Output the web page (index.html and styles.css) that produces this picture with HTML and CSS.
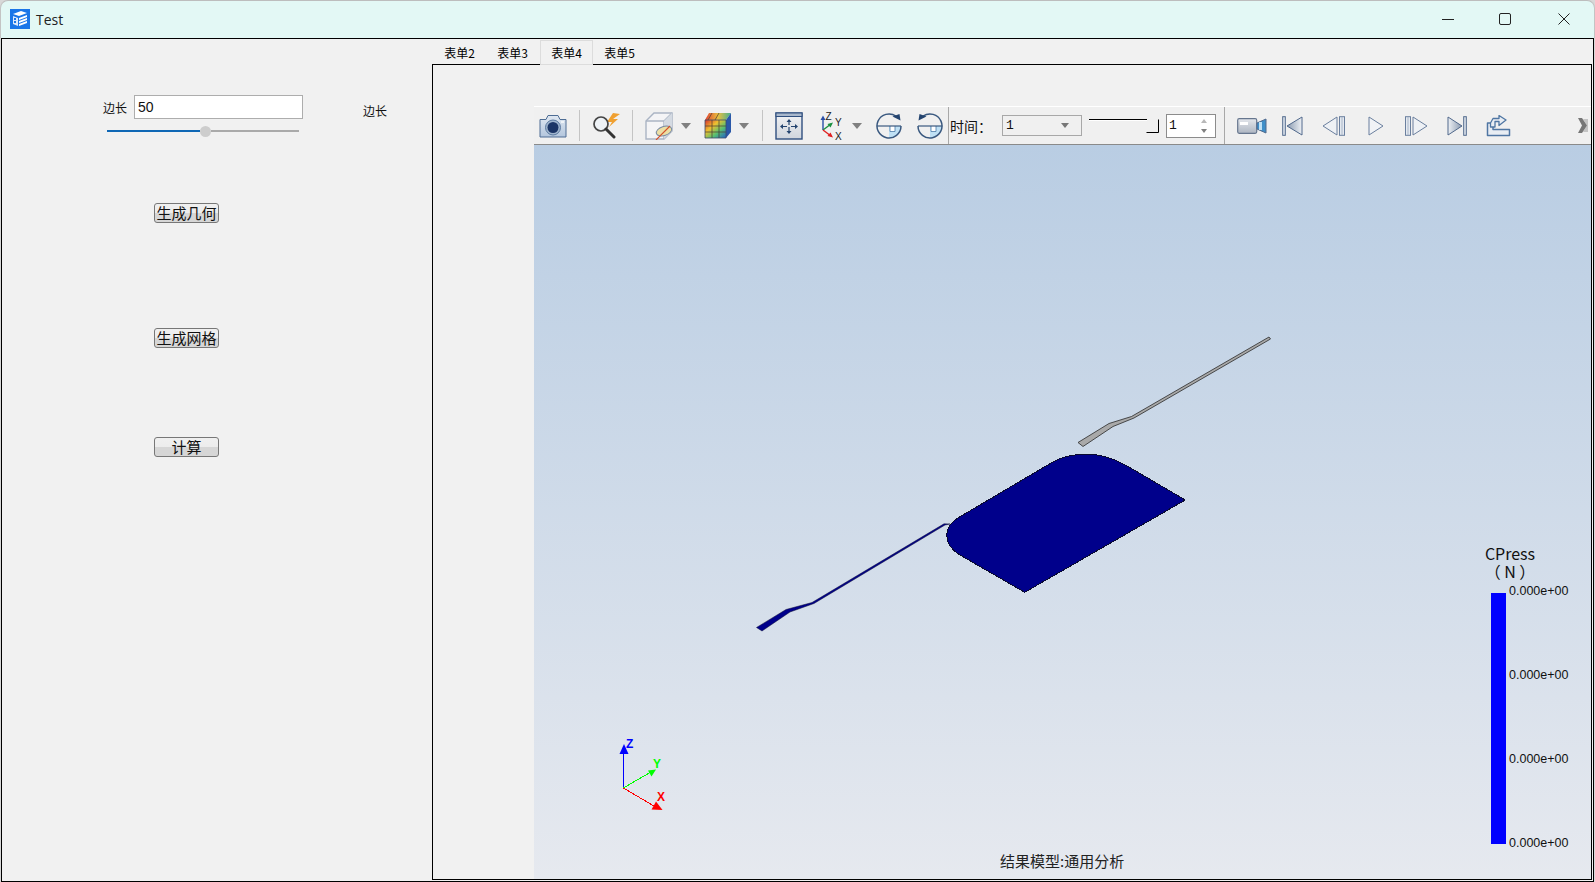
FILE: index.html
```html
<!DOCTYPE html>
<html lang="zh">
<head>
<meta charset="utf-8">
<title>Test</title>
<link rel="stylesheet" href="styles.css">
</head>
<body>
<div class="window">
  <header class="titlebar">
    <svg class="app-icon" width="20" height="20" viewBox="0 0 20 20">
      <rect width="20" height="20" fill="#1a76e8"/>
      <path d="M3 5 L11 2 L17 4 L9 7 Z" fill="#fff"/>
      <path d="M3 7 L8 9 L8 17 L3 15 Z" fill="#dce9fb"/>
      <path d="M9 9 L17 6 L17 8 L9 11 Z M9 12 L17 9 L17 11 L9 14 Z M9 15 L17 12 L17 14 L9 17 Z" fill="#fff"/>
      <path d="M4 9h2v2H4z M4 12h2v2H4z" fill="#1a76e8"/>
    </svg>
    <span class="app-title">Test</span>
    <div class="win-controls">
      <svg width="12" height="12" viewBox="0 0 12 12"><path d="M0 6.5H12" stroke="#222" stroke-width="1"/></svg>
      <svg class="win-max" width="12" height="12" viewBox="0 0 12 12"><rect x=".5" y=".5" width="11" height="11" rx="1.5" fill="none" stroke="#222"/></svg>
      <svg class="win-close" width="12" height="12" viewBox="0 0 12 12"><path d="M.5 .5L11.5 11.5M11.5 .5L.5 11.5" stroke="#222" stroke-width="1"/></svg>
    </div>
  </header>

  <div class="client">
    <aside class="left-panel">
      <div class="param-row">
        <label class="small-label">边长</label>
        <input class="text-field" type="text" value="50">
        <span class="small-label second-label">边长</span>
      </div>
      <div class="slider"><div class="slider-fill"></div><div class="slider-thumb"></div><div class="slider-rest"></div></div>
      <button class="action-btn first-btn">生成几何</button>
      <button class="action-btn second-btn">生成网格</button>
      <button class="action-btn third-btn">计算</button>
    </aside>

    <main class="right-panel">
      <nav class="tabs">
        <span class="tab">表单2</span>
        <span class="tab">表单3</span>
        <span class="tab active">表单4</span>
        <span class="tab">表单5</span>
      </nav>
      <section class="pane">
        <div class="viewer">
          <div class="toolbar">
            <svg class="ml5" width="28" height="24" viewBox="0 0 28 24">
              <defs><linearGradient id="camg" x1="0" y1="0" x2="0" y2="1"><stop offset="0" stop-color="#dfe7f1"/><stop offset="1" stop-color="#b3c6dd"/></linearGradient></defs>
              <path d="M1 5.5H7L9 1.5H19L21 5.5H27V23H1Z" fill="url(#camg)" stroke="#4e6d94" stroke-linejoin="round"/>
              <circle cx="14" cy="13.5" r="7.5" fill="#9fb4cd" stroke="#5b7aa0"/>
              <circle cx="14" cy="13.5" r="5.5" fill="#1b3566"/>
              <rect x="22" y="7" width="3" height="2" fill="#eef3f8"/>
            </svg>
            <i class="sep ml12"></i>
            <svg class="ml12" width="28" height="26" viewBox="0 0 28 26">
              <path d="M21 0 L15 9 H20 L17 14 L26 6 H21 L28 1 Z" fill="#f0a030"/>
              <circle cx="9" cy="11" r="7" fill="#eef2f6" stroke="#444" stroke-width="1.7"/>
              <path d="M14 16L22 24" stroke="#333" stroke-width="3" stroke-linecap="round"/>
            </svg>
            <i class="sep ml12"></i>
            <svg class="ml12" width="28" height="28" viewBox="0 0 28 28">
              <path d="M1 9L9 1H27V19L19 27H1Z" fill="#f4f4f6" stroke="#aab4c4" stroke-width="1.4"/>
              <path d="M1 9H19V27M19 9L27 1" fill="none" stroke="#aab4c4" stroke-width="1.4"/>
              <path d="M19 9L27 1V19L19 27Z" fill="#d4dae2"/>
              <ellipse cx="19" cy="19" rx="8" ry="4.5" transform="rotate(-18 19 19)" fill="#ecdfa4" stroke="#7a8aa0"/>
              <path d="M11 28L25 14" stroke="#d4502a" stroke-width="1.1"/>
            </svg>
            <svg class="ml8" width="10" height="6" viewBox="0 0 10 6"><path d="M0 0H10L5 6Z" fill="#808080"/></svg>
            <svg class="ml13" width="28" height="27" viewBox="0 0 28 27">
              <defs>
                <linearGradient id="ccg" x1="0" y1="0" x2="1" y2="1"><stop offset="0" stop-color="#d8302c"/><stop offset=".35" stop-color="#eec030"/><stop offset=".65" stop-color="#58c070"/><stop offset="1" stop-color="#2060c8"/></linearGradient>
                <linearGradient id="cct" x1="0" y1="0" x2="1" y2="0"><stop offset="0" stop-color="#e04030"/><stop offset=".5" stop-color="#e8c040"/><stop offset="1" stop-color="#40b090"/></linearGradient>
              </defs>
              <path d="M5 1H27L22 8H1Z" fill="url(#cct)"/>
              <rect x="1" y="8" width="21" height="18" fill="url(#ccg)"/>
              <path d="M22 8L27 1V20L22 26Z" fill="#2a58a8"/>
              <path d="M1 14H22M1 20H22M8 8V26M15 8V26M8 1L4 8M15 1L11 8" stroke="#4a3a30" stroke-width=".7"/>
              <path d="M1 8H22V26H1Z" fill="none" stroke="#3c4c68" stroke-width=".8"/>
            </svg>
            <svg class="ml7" width="10" height="6" viewBox="0 0 10 6"><path d="M0 0H10L5 6Z" fill="#808080"/></svg>
            <i class="sep ml13"></i>
            <svg class="ml12" width="28" height="28" viewBox="0 0 28 28">
              <defs><linearGradient id="fitg" x1="0" y1="0" x2="0" y2="1"><stop offset="0" stop-color="#f2f3f5"/><stop offset="1" stop-color="#d0d5dd"/></linearGradient></defs>
              <rect x="1" y="1" width="26" height="26" fill="url(#fitg)" stroke="#2f4f7f" stroke-width="1.4"/>
              <rect x="1" y="1" width="26" height="3.5" fill="#a9b8cc" stroke="#2f4f7f"/>
              <path d="M14 8V13M14 15V20M6 14.5H12M16 14.5H22" stroke="#24446f" stroke-width="1.2"/>
              <path d="M14 7L11.5 10H16.5ZM14 22L11.5 19H16.5ZM5 14.5L8 12V17ZM23 14.5L20 12V17Z" fill="#24446f"/>
            </svg>
            <svg class="ml17" width="23" height="28" viewBox="0 0 23 28">
              <path d="M3 18V6" stroke="#2a4fa8" stroke-width="1.4"/><path d="M3 3.5L.5 8H5.5Z" fill="#2a4fa8"/>
              <path d="M3 18L11 12" stroke="#1a9040" stroke-width="1.4"/><path d="M13 10.5L7.5 12L10.5 15.5Z" fill="#1a9040"/>
              <path d="M3 18L11 24" stroke="#e02020" stroke-width="1.4"/><path d="M13 25.5L7.5 24L10.5 20.5Z" fill="#e02020"/>
              <text class="axis-mini" x="5.5" y="8">Z</text><text class="axis-mini" x="15" y="14">Y</text><text class="axis-mini" x="15" y="27.5">X</text>
            </svg>
            <svg class="ml9" width="10" height="6" viewBox="0 0 10 6"><path d="M0 0H10L5 6Z" fill="#808080"/></svg>
            <svg class="ml14" width="26" height="26" viewBox="0 0 26 26">
              <path d="M13 13H25A12 12 0 0 1 13 25Z" fill="#bfe0f4"/>
              <path d="M14 13V18.5H19V13" fill="#fff" stroke="#4a7aa8" stroke-width=".8"/>
              <path d="M1 13H25" stroke="#39587f" stroke-width="1.2"/>
              <path d="M20 3.2A12 12 0 1 0 25 13" fill="none" stroke="#39587f" stroke-width="1.5"/>
              <path d="M24.5 7.5L23.5 1L16.5 3.5Z" fill="#24446f"/>
            </svg>
            <svg class="ml15" width="26" height="26" viewBox="0 0 26 26">
              <path d="M13 13H25A12 12 0 0 1 13 25Z" fill="#bfe0f4"/>
              <path d="M14 13V18.5H19V13" fill="#fff" stroke="#4a7aa8" stroke-width=".8"/>
              <path d="M1 13H25" stroke="#39587f" stroke-width="1.2"/>
              <path d="M6 3.2A12 12 0 1 1 1 13" fill="none" stroke="#39587f" stroke-width="1.5"/>
              <path d="M1.5 7.5L2.5 1L9.5 3.5Z" fill="#24446f"/>
            </svg>
            <i class="sep sep-full ml5"></i>
            <span class="time-label">时间：</span>
            <div class="combo"><span>1</span><svg width="8" height="5" viewBox="0 0 8 5"><path d="M0 0H8L4 5Z" fill="#777"/></svg></div>
            <svg class="ml7" width="70" height="14" viewBox="0 0 70 14">
              <path d="M0 .5H58" stroke="#000"/><path d="M0 1.5H58" stroke="#fff"/>
              <path d="M57.5 13.5H69.5V.5" fill="none" stroke="#000"/>
            </svg>
            <div class="spin ml7"><span>1</span><svg width="8" height="16" viewBox="0 0 8 16"><path d="M4 1L7 5H1Z" fill="#b8b8b8"/><path d="M4 15L7 11H1Z" fill="#808080"/></svg></div>
            <i class="sep sep-full ml8"></i>
            <div class="playbar ml8">
              <svg class="ml4" width="30" height="16" viewBox="0 0 30 16">
                <defs><linearGradient id="vidg" x1="0" y1="0" x2="0" y2="1"><stop offset="0" stop-color="#e4e7ec"/><stop offset="1" stop-color="#aeb6c2"/></linearGradient></defs>
                <rect x=".7" y=".7" width="19" height="14.6" rx="1.5" fill="url(#vidg)" stroke="#66768e" stroke-width="1.2"/>
                <rect x="3" y="4" width="8" height="3" fill="#fff"/>
                <path d="M20 5L29 1V15L20 11Z" fill="#3f8fc8" stroke="#51698c"/>
                <rect x="22" y="4" width="3" height="8" fill="#bfe0f4"/>
              </svg>
              <svg class="ml15" width="21" height="20" viewBox="0 0 21 20">
                <defs><linearGradient id="pbg" x1="0" y1="0" x2="1" y2="0"><stop offset="0" stop-color="#8a9ab0"/><stop offset="1" stop-color="#eef1f5"/></linearGradient></defs>
                <rect x=".7" y=".7" width="2.6" height="18.6" fill="#dfe5ee" stroke="#51698c"/>
                <path d="M20 1V19L5 10Z" fill="url(#pbg)" stroke="#51698c" stroke-linejoin="round"/>
              </svg>
              <svg class="ml19" width="23" height="20" viewBox="0 0 23 20">
                <path d="M15 1V19L1 10Z" fill="#eef1f5" stroke="#6a7f9e" stroke-linejoin="round"/>
                <rect x="17.5" y=".7" width="5" height="18.6" fill="#e4e9f0" stroke="#6a7f9e"/>
                <path d="M20 1V19" stroke="#a9b6c8"/>
              </svg>
              <svg class="ml23" width="16" height="20" viewBox="0 0 16 20">
                <path d="M1 1V19L15 10Z" fill="#f1f3f6" stroke="#6a7f9e" stroke-linejoin="round"/>
              </svg>
              <svg class="ml21" width="23" height="20" viewBox="0 0 23 20">
                <rect x=".5" y=".7" width="5" height="18.6" fill="#e4e9f0" stroke="#6a7f9e"/>
                <path d="M3 1V19" stroke="#a9b6c8"/>
                <path d="M8 1V19L22 10Z" fill="#eef1f5" stroke="#6a7f9e" stroke-linejoin="round"/>
              </svg>
              <svg class="ml19" width="20" height="20" viewBox="0 0 20 20">
                <defs><linearGradient id="pbg2" x1="0" y1="0" x2="1" y2="0"><stop offset="0" stop-color="#eef1f5"/><stop offset="1" stop-color="#8a9ab0"/></linearGradient></defs>
                <path d="M1 1V19L15 10Z" fill="url(#pbg2)" stroke="#51698c" stroke-linejoin="round"/>
                <rect x="16.7" y=".7" width="2.6" height="18.6" fill="#dfe5ee" stroke="#51698c"/>
              </svg>
              <svg class="ml19" width="25" height="22" viewBox="0 0 25 22">
                <path d="M1.5 8V20.5H23.5V14.5H7V8Z" fill="#e8edf3" stroke="#4f76a3" stroke-width="1.5" stroke-linejoin="round"/>
                <path d="M4.5 8V12H9V6.5H13V10.5L20 5L13 .5V3.5H7Z" fill="#e8edf3" stroke="#4f76a3" stroke-width="1.3" stroke-linejoin="round"/>
              </svg>
              <svg class="overflow" width="10" height="15" viewBox="0 0 10 15">
                <path d="M5 1H10V14H5L9 7.5Z" fill="#c4c4c4"/><path d="M0 0H4L9 7.5L4 15H0L4 7.5Z" fill="#777"/>
              </svg>
            </div>
          </div>
          <div class="canvas">
            <svg class="scene" width="1057" height="734" viewBox="534 145 1057 734">
              <path d="M1270.5 339L1134 418L1113 426.5L1083 446.5L1078 442.5L1109 423.5L1131.5 416.5L1269 337Z" fill="#a9a9a9" stroke="#2a2a2a" stroke-width=".8"/>
              <path d="M950 524L945 525L814 603.5L790 612L762 631L756.5 627.5L786 609.5L812 602.5L944 523.8Z" fill="#00008b" stroke="#0a0a30" stroke-width=".5"/>
              <path d="M1024.7 592.3L1185.3 500L1126.7 465.7Q1106 454 1086.7 454.3Q1068 454 1053.3 461.7L960 516.7Q946.7 524 946.7 535Q946.7 547 960 555Z" fill="#00008b" stroke="#0a0a30" stroke-width="1" shape-rendering="crispEdges"/>
              <g shape-rendering="crispEdges">
                <path d="M623.3 788V751" stroke="#0000ff" stroke-width="1"/>
                <path d="M623.3 788L650 772.5" stroke="#00ff00" stroke-width="1"/>
                <path d="M623.3 788L654 806" stroke="#ff0000" stroke-width="1"/>
              </g>
              <path d="M624 744L628.5 754H619.5Z" fill="#0000ff"/>
              <path d="M656 769.5L648 770.5L651.5 776.5Z" fill="#00ff00"/>
              <path d="M662.5 810L651.5 809.5L656 801.5Z" fill="#ff0000"/>
              <text class="axis-label z" x="626" y="748">Z</text>
              <text class="axis-label y" x="653" y="768">Y</text>
              <text class="axis-label x" x="657" y="801">X</text>
            </svg>
            <div class="legend">
              <div class="legend-title">CPress<br>（ N ）</div>
              <div class="legend-body">
                <div class="legend-bar"></div>
                <div class="legend-ticks"><span>0.000e+00</span><span>0.000e+00</span><span>0.000e+00</span><span>0.000e+00</span></div>
              </div>
            </div>
            <div class="result-caption">结果模型:通用分析</div>
          </div>
        </div>
      </section>
    </main>
  </div>
</div>
</body>
</html>
```

FILE: styles.css
```css
* { box-sizing: border-box; }
html, body { margin: 0; padding: 0; height: 100%; overflow: hidden; background: #d8d8d8; }
body { font-family: "Noto Sans CJK SC", "Liberation Sans", sans-serif; color: #000; }

.window { width: 1595px; height: 882px; display: flex; flex-direction: column; }

.titlebar {
  height: 38px; flex: none; display: flex; align-items: center;
  background: #e3f8f5; border-radius: 8px 8px 0 0;
  border-top: 1px solid #bdbdbd; border-left: 1px solid #c4c4c4; border-right: 1px solid #c4c4c4;
  padding: 0 0 1px 9px;
}
.app-icon { flex: none; }
.app-title { margin-left: 6px; font: 14px "Open Sans", sans-serif; color: #222; }
.win-controls { margin-left: auto; display: flex; gap: 46px; margin-right: 24px; }
.win-controls svg { display: block; }
.win-max { margin-left: -1px; }
.win-close { margin-left: 1px; }

.client {
  flex: 1; min-height: 0; margin: 0 1px; display: flex;
  border: 1px solid #000; background: #f1f1f1;
}

.left-panel { width: 430px; flex: none; display: flex; flex-direction: column; align-items: flex-start; padding-top: 56px; }
.param-row { display: flex; align-items: flex-start; margin-left: 101px; }
.small-label { width: 24px; font-size: 12px; line-height: 26px; color: #111; flex: none; }
.second-label { margin-left: 60px; margin-top: 3px; }
.text-field {
  width: 169px; height: 24px; margin-left: 7px; padding: 0 3px;
  border: 1px solid #adadad; background: #fff; outline: none;
  font: 14px "Liberation Sans", sans-serif; color: #111;
}
.slider { position: relative; margin: 6px 0 0 105px; width: 192px; height: 2px; display: flex; align-items: center; }
.slider-fill { width: 93px; height: 2px; background: #0f67b5; }
.slider-rest { flex: 1; height: 2px; background: #aaa; }
.slider-thumb { width: 11px; height: 11px; margin: -5px 0; border-radius: 50%; background: #cdcdcd; flex: none; }

.action-btn {
  display: block; width: 65px; height: 20px; margin-left: 152px; padding: 0;
  border: 1px solid #777; border-radius: 3px;
  background: linear-gradient(#f0f0f0 0, #ececec 50%, #d6d6d6 50%, #d6d6d6 100%);
  font: 15px/18px "Noto Sans CJK SC", sans-serif; color: #111; text-align: center;
}
.first-btn { margin-top: 71px; }
.second-btn { margin-top: 105px; }
.third-btn { margin-top: 89px; letter-spacing: 0; }

.right-panel { flex: 1; min-width: 0; display: flex; flex-direction: column; padding: 0 1px 1px 0; }
.tabs { height: 25px; flex: none; display: flex; padding: 1px 0 0 1px; position: relative; z-index: 1; }
.tab {
  width: 53px; height: 25px; display: flex; align-items: center; justify-content: center;
  font: 12px "Noto Sans CJK SC", sans-serif; color: #000;
}
.tab.active { background: #f1f1f1; border: 1px solid #dcdcdc; border-bottom: 1px solid #dcdcdc; margin-left: 1px; }

.pane { flex: 1; min-height: 0; border: 1px solid #000; padding: 41px 0 0 101px; }
.viewer { height: 100%; display: flex; flex-direction: column; }

.toolbar {
  height: 39px; flex: none; display: flex; align-items: center;
  background: #f0f0f0; border-top: 1px solid #fff; border-bottom: 1px solid #8a8a8a;
}
.toolbar svg { flex: none; display: block; }
.sep { display: block; width: 1px; height: 31px; background: #c4c4c4; flex: none; }
.sep-full { height: 37px; background: #a8a8a8; }
.ml4 { margin-left: 4px; } .ml5 { margin-left: 5px; } .ml7 { margin-left: 7px; } .ml8 { margin-left: 8px; }
.ml9 { margin-left: 9px; } .ml12 { margin-left: 12px; } .ml13 { margin-left: 13px; } .ml14 { margin-left: 14px; }
.ml15 { margin-left: 15px; } .ml17 { margin-left: 17px; } .ml19 { margin-left: 19px; } .ml21 { margin-left: 21px; }
.ml23 { margin-left: 23px; }
.axis-mini { font: 10px "Liberation Sans", sans-serif; fill: #222; }
.time-label { width: 52px; margin-left: 1px; font-size: 14px; line-height: 20px; color: #111; flex: none; white-space: nowrap; }
.combo {
  width: 80px; height: 21px; flex: none; display: flex; align-items: center; justify-content: space-between;
  padding: 0 12px 0 3px; border: 1px solid #a8a8a8; background: #f0f0f0;
  font: 13px "Liberation Mono", monospace; color: #111;
}
.spin {
  width: 50px; height: 24px; flex: none; display: flex; align-items: center; justify-content: space-between;
  padding: 0 7px 0 2px; border: 1px solid #8c8c8c; background: #fff;
  font: 13px "Liberation Mono", monospace; color: #111;
}
.playbar { flex: 1; align-self: stretch; display: flex; align-items: center; margin-top: -1px; border-top: 1px solid #fff; box-shadow: 0 1px 0 #8a8a8a; }
.overflow { margin-left: auto; margin-right: 3px; }

.canvas { position: relative; flex: 1; min-height: 0; overflow: hidden; background: linear-gradient(#b9cde3, #e6e9ef); }
.scene { position: absolute; left: 0; top: 0; display: block; }
.axis-label { font: bold 12px "Liberation Sans", sans-serif; }
.axis-label.z { fill: #0000ff; } .axis-label.y { fill: #00ff00; } .axis-label.x { fill: #ff0000; }

.legend { position: absolute; left: 941px; top: 399px; width: 120px; }
.legend-title { width: 70px; text-align: center; font: 16px/18px "Noto Sans CJK SC", "Liberation Sans", sans-serif; color: #111; }
.legend-body { position: relative; margin: 13px 0 0 16px; display: flex; }
.legend-bar { width: 15px; height: 251px; background: #0000ff; flex: none; }
.legend-ticks { display: flex; flex-direction: column; justify-content: space-between; height: 266px; margin: -9px 0 0 3px; font: 12.5px/14px "Liberation Sans", sans-serif; color: #111; }
.result-caption { position: absolute; left: 466px; top: 706px; font: 15px/20px "Noto Sans CJK SC", sans-serif; color: #222; white-space: nowrap; }
```
